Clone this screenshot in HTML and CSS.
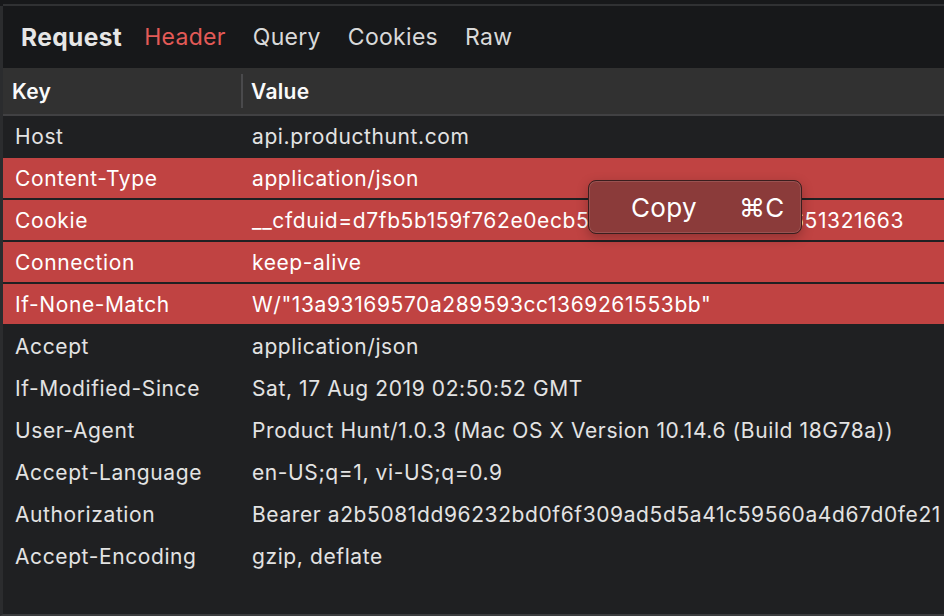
FILE: index.html
```html
<!DOCTYPE html>
<html>
<head>
<meta charset="utf-8">
<link rel="stylesheet" href="styles.css">
</head>
<body>
<div class="app">
  <div class="topline"></div>
  <div class="main">
    <div class="tabs">
      <span class="tab title">Request</span>
      <span class="tab active">Header</span>
      <span class="tab">Query</span>
      <span class="tab">Cookies</span>
      <span class="tab">Raw</span>
    </div>
    <div class="thead">
      <div class="th key">Key</div>
      <div class="th val"><span class="div"></span>Value</div>
    </div>
    <div class="rows">
      <div class="row"><div class="k">Host</div><div class="v">api.producthunt.com</div></div>
      <div class="row sel"><div class="k">Content-Type</div><div class="v">application/json</div></div>
      <div class="row sel"><div class="k">Cookie</div><div class="v">__cfduid=d7fb5b159f762e0ecb5a2e9c8f4f1c1b4156651321663</div></div>
      <div class="row sel"><div class="k">Connection</div><div class="v">keep-alive</div></div>
      <div class="row sel"><div class="k">If-None-Match</div><div class="v">W/"13a93169570a289593cc1369261553bb"</div></div>
      <div class="row"><div class="k">Accept</div><div class="v">application/json</div></div>
      <div class="row"><div class="k">If-Modified-Since</div><div class="v">Sat, 17 Aug 2019 02:50:52 GMT</div></div>
      <div class="row"><div class="k">User-Agent</div><div class="v">Product Hunt/1.0.3 (Mac OS X Version 10.14.6 (Build 18G78a))</div></div>
      <div class="row"><div class="k">Accept-Language</div><div class="v">en-US;q=1, vi-US;q=0.9</div></div>
      <div class="row"><div class="k">Authorization</div><div class="v">Bearer a2b5081dd96232bd0f6f309ad5d5a41c59560a4d67d0fe21</div></div>
      <div class="row"><div class="k">Accept-Encoding</div><div class="v">gzip, deflate</div></div>
    </div>
    <div class="menu">
      <span class="mi">Copy</span><span class="sc">⌘C</span>
    </div>
  </div>
</div>
</body>
</html>
```
FILE: styles.css
```css
html, body {
  margin: 0;
  padding: 0;
  background: #17181a;
  width: 944px;
  height: 616px;
  overflow: hidden;
  font-family: "Inter", "Liberation Sans", sans-serif;
}
.app {
  width: 944px;
  height: 616px;
  display: flex;
  flex-direction: column;
}
.topline {
  height: 6px;
  border-bottom: 2px solid #303133;
  box-sizing: border-box;
  margin-left: 3px;
}
.main {
  position: relative;
  flex: 1;
  border-left: 3px solid #2b2c2e;
  border-bottom: 2px solid #3a3b3d;
  background: #1f2022;
  display: flex;
  flex-direction: column;
  overflow: hidden;
}
.tabs {
  height: 62px;
  background: #17181a;
  display: flex;
  align-items: center;
  padding-left: 18px;
  box-sizing: border-box;
}
.tab {
  font-size: 23px;
  color: #d9d9d9;
  margin-right: 27px;
  letter-spacing: 0.3px;
}
.tab.title {
  font-weight: 700;
  font-size: 24.5px;
  color: #e6e6e6;
  margin-right: 22px;
  letter-spacing: 0.4px;
}
.tab.active {
  color: #e35a57;
}
.thead {
  height: 48px;
  background: #313131;
  border-bottom: 2px solid #414143;
  display: flex;
  align-items: center;
  box-sizing: border-box;
}
.th {
  font-size: 21px;
  font-weight: 600;
  color: #fafafa;
  letter-spacing: 0.3px;
}
.th.key {
  width: 238px;
  padding-left: 9px;
  box-sizing: border-box;
}
.th.val {
  display: flex;
  align-items: center;
}
.th .div {
  width: 2px;
  height: 34px;
  background: #4a4a4c;
  margin-right: 8px;
}
.rows {
  display: flex;
  flex-direction: column;
}
.row {
  height: 42px;
  display: flex;
  align-items: center;
  border-bottom: 2px solid #1f2022;
  box-sizing: border-box;
  padding-top: 0;
  font-size: 21px;
  letter-spacing: 0.6px;
  color: #e3e3e3;
  white-space: nowrap;
}
.row.sel {
  background: #c04342;
  color: #ffffff;
}
.k {
  width: 249px;
  padding-left: 12px;
  flex-shrink: 0;
  box-sizing: border-box;
}
.v {
  flex-shrink: 0;
}
.menu {
  position: absolute;
  left: 585px;
  top: 174px;
  width: 214px;
  height: 54px;
  box-sizing: border-box;
  border-radius: 8px;
  background: #8b3b3a;
  border: 1px solid #3a1e1e;
  box-shadow: inset 0 0 0 1px rgba(255, 255, 255, 0.12), 0 4px 12px rgba(0, 0, 0, 0.25);
  display: flex;
  align-items: center;
  padding-left: 42px;
  font-size: 26px;
  letter-spacing: 0.3px;
  color: #ffffff;
}
.mi {
  width: 108px;
}
```
